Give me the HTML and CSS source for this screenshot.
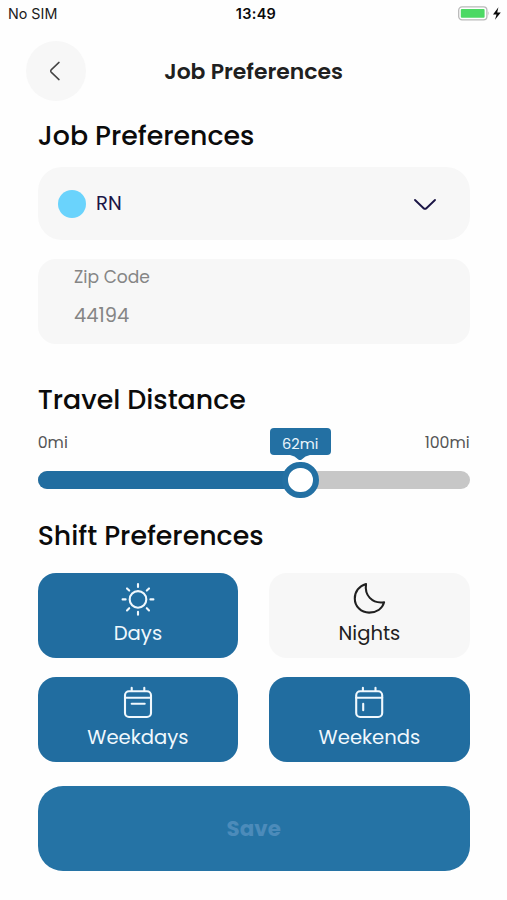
FILE: index.html
```html
<!DOCTYPE html>
<html lang="en">
<head>
<meta charset="utf-8">
<title>Job Preferences</title>
<link rel="stylesheet" href="styles.css">
</head>
<body>
<div class="status">
  <span class="carrier">No SIM</span>
  <span class="clock">13:49</span>
  <svg class="battery" width="44" height="16" viewBox="0 0 44 16">
    <rect x="0.7" y="0.9" width="28.2" height="13" rx="3.4" fill="#fff" stroke="#b9b9b9" stroke-width="1.3"/>
    <rect x="2.8" y="3" width="23.8" height="8.8" rx="1" fill="#4cd964"/>
    <path d="M30.4 5.2q1.6 2.2 0 4.6z" fill="#b5b5b5"/>
    <path d="M40.4 1.2 35 8.4h3.5L37 13.8 42.8 6.4h-3.6z" fill="#0a0a0a"/>
  </svg>
</div>
<header class="topbar">
  <button class="back" aria-label="Back">
    <svg width="12" height="20" viewBox="0 0 12 20"><path d="M10 1.4 2.4 8.6Q1 10 2.4 11.4L10 18.6" fill="none" stroke="#444" stroke-width="1.5" stroke-linecap="round"/></svg>
  </button>
  <h1 class="title">Job Preferences</h1>
</header>
<main class="content">
  <h2 class="heading">Job Preferences</h2>
  <div class="select">
    <span class="dot"></span>
    <span class="select-value">RN</span>
    <svg class="chevron" width="24" height="14" viewBox="0 0 24 14"><path d="M2 2 10.6 10.2Q12 11.5 13.4 10.2L22 2" fill="none" stroke="#1b1546" stroke-width="1.9" stroke-linecap="round"/></svg>
  </div>
  <div class="field">
    <span class="label">Zip Code</span>
    <span class="value">44194</span>
  </div>
  <h2 class="heading travel">Travel Distance</h2>
  <div class="range-labels"><span>0mi</span><span>100mi</span></div>
  <div class="track">
    <div class="fill"></div>
    <div class="thumb"></div>
    <div class="tip"><span>62mi</span><svg width="20" height="6" viewBox="0 0 20 6"><path d="M0 0H20Q15 1 12 4.2Q10 6 8 4.2Q5 1 0 0z" fill="#2370a3"/></svg></div>
  </div>
  <h2 class="heading shift">Shift Preferences</h2>
  <div class="shifts">
    <button class="card on">
      <svg width="36" height="36" viewBox="0 0 36 36" fill="none" stroke="#f0f8fd" stroke-width="2.1" stroke-linecap="round"><circle cx="18" cy="18.4" r="8.3"/><path d="M18 3v3M18 30.8v3M2.6 18.4h3M30.4 18.4h3M7 7.4l2.2 2.2M26.8 27.2 29 29.4M29 7.4l-2.2 2.2M9.2 27.2 7 29.4"/></svg>
      <span>Days</span>
    </button>
    <button class="card">
      <svg width="36" height="36" viewBox="0 0 36 36" fill="none" stroke="#202020" stroke-width="2.1" stroke-linejoin="round"><path d="M15 3C8 5 3.8 10.8 3.8 17.4C3.8 25.5 10.2 31.6 18.1 31.6C25.4 31.6 31.3 27.7 33.1 21.2C26 22.2 21.9 20.2 18.8 16.9C15.3 13.2 14.2 8.6 15 3Z"/></svg>
      <span>Nights</span>
    </button>
    <button class="card on">
      <svg width="36" height="36" viewBox="0 0 36 36" fill="none" stroke="#f0f8fd" stroke-width="2.1" stroke-linecap="round"><rect x="5" y="6.2" width="26" height="25.8" rx="4"/><path d="M5 12.8h26M11.7 2.7v3.2M24.3 2.7v3.2M11.7 18.8h13"/></svg>
      <span>Weekdays</span>
    </button>
    <button class="card on">
      <svg width="36" height="36" viewBox="0 0 36 36" fill="none" stroke="#f0f8fd" stroke-width="2.1" stroke-linecap="round"><rect x="5.2" y="6.2" width="26" height="25.8" rx="4"/><path d="M5.2 12.8h26M11.9 2.7v3.2M24.5 2.7v3.2M12.2 18.8v6.4"/></svg>
      <span>Weekends</span>
    </button>
  </div>
  <button class="save">Save</button>
</main>
</body>
</html>
```
FILE: styles.css
```css
* { box-sizing: border-box; }
body { margin: 0; background: #fefefe; color: #0b0b0b; font-family: Poppins, Inter, sans-serif; height: 900px; overflow: hidden; }
button { border: 0; padding: 0; font: inherit; color: inherit; }
h1, h2 { margin: 0; font-weight: 500; }
svg { display: block; flex: none; }
.status { display: grid; grid-template-columns: 1fr auto 1fr; align-items: center; height: 28px; padding: 0 5px 0 8px; font-family: Inter, sans-serif; font-size: 14.3px; color: #202020; }
.carrier, .clock { margin-top: -2px; }
.clock { font-weight: 600; font-size: 14.5px; letter-spacing: 0.3px; color: #0b0b0b; padding-left: 2px; }
.battery { justify-self: end; margin-top: -1px; }
.topbar { display: grid; grid-template-columns: 60px 1fr 60px; align-items: center; height: 60px; margin: 13px 26px 0; }
.back { width: 60px; height: 60px; border-radius: 50%; background: #f7f7f7; display: flex; align-items: center; justify-content: center; padding-right: 2px; }
.title { font-size: 21.9px; font-weight: 600; line-height: 30px; text-align: center; color: #202020; padding-top: 1px; }
.content { display: flex; flex-direction: column; margin: 0 37.3px 0 37.7px; }
.heading { font-size: 26.8px; line-height: 36px; margin-top: 17px; white-space: nowrap; }
.select { display: flex; align-items: center; height: 72.5px; margin-top: 13.3px; padding: 0 33px 0 20px; border-radius: 24px; background: #f7f7f7; color: #1b1546; }
.dot { width: 28px; height: 28px; border-radius: 50%; background: #6ad3fc; margin-right: 10.4px; }
.select-value { flex: 1; font-size: 19.6px; line-height: 28px; margin-top: -2px; }
.chevron { margin-top: 2px; }
.field { display: flex; flex-direction: column; height: 84.5px; margin-top: 19.5px; padding: 5.5px 36.4px; border-radius: 18px; background: #f7f7f7; color: #858585; }
.label { font-size: 17.1px; line-height: 24px; }
.value { font-size: 19.4px; line-height: 26px; margin-top: 14px; }
.travel { margin-top: 38.2px; }
.range-labels { display: flex; justify-content: space-between; margin-top: 12.8px; font-size: 15.8px; line-height: 24px; color: #555; }
.track { position: relative; height: 18.6px; margin-top: 15.8px; border-radius: 10px; background: #c7c7c7; }
.fill { width: 61%; height: 100%; border-radius: 10px 0 0 10px; background: #216da0; }
.thumb { position: absolute; left: 244.5px; top: -9px; width: 36.6px; height: 36.6px; border-radius: 50%; border: 6px solid #2370a3; background: #fff; }
.tip { position: absolute; left: 232px; top: -43px; width: 61px; height: 27px; border-radius: 4px; background: #2370a3; color: #eaf5fc; display: flex; flex-direction: column; align-items: center; font-size: 14.6px; line-height: 32px; }
.tip span { height: 27px; }
.shift { margin-top: 28.4px; }
.shifts { display: grid; grid-template-columns: 1fr 1fr; gap: 19px 31px; margin-top: 19.1px; }
.card { display: flex; flex-direction: column; align-items: center; height: 85px; padding-top: 8px; border-radius: 18px; background: #f7f7f7; color: #202020; font-size: 19.6px; line-height: 26px; }
.card span { margin-top: 3.2px; }
.card.on { background: #216da0; color: #f0f8fd; }
.save { height: 85px; margin-top: 24.7px; border-radius: 25px; background: #2573a5; color: #4c8bba; font-size: 21.4px; font-weight: 700; }
```
